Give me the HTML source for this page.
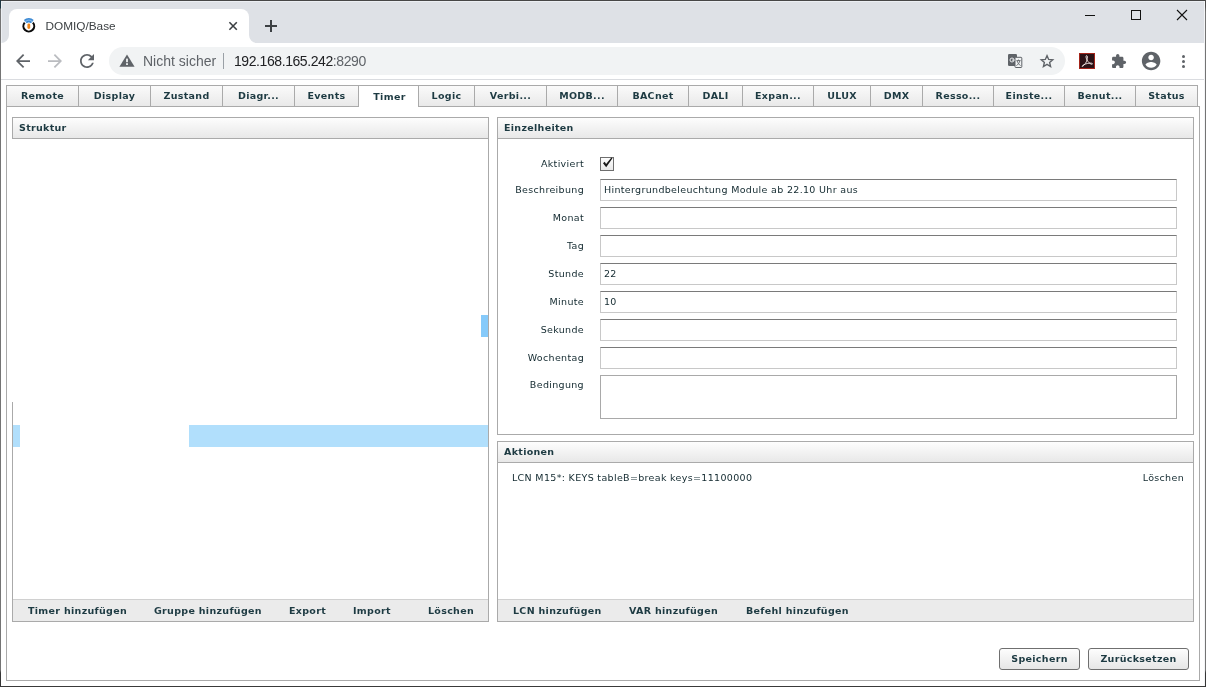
<!DOCTYPE html>
<html lang="de">
<head>
<meta charset="utf-8">
<title>DOMIQ/Base</title>
<style>
html,body{margin:0;padding:0;}
body{width:1206px;height:687px;position:relative;overflow:hidden;background:#fff;font-family:"DejaVu Sans","Liberation Sans",sans-serif;font-size:9.5px;letter-spacing:0.33px;color:#12292f;}
.abs{position:absolute;}
/* window frame */
#frame{left:0;top:0;width:1206px;height:687px;z-index:50;pointer-events:none;}
#frame i{position:absolute;display:block;}
#f-t{left:0;top:0;width:1206px;height:1px;background:#474747;}
#f-b{left:0;top:686px;width:1206px;height:1px;background:#3a3a3a;}
#f-l{left:0;top:0;width:1px;height:687px;background:linear-gradient(to bottom,#1f3742 0,#1f3742 8px,#747474 9px,#747474 670px,#353535 673px,#353535 687px);}
#f-r{left:1205px;top:0;width:1px;height:687px;background:linear-gradient(to bottom,#4a4a4a 0,#4a4a4a 6px,#747474 12px,#747474 670px,#353535 673px,#353535 687px);}
#f-hl{left:1px;top:1px;width:1204px;height:1px;background:#eceff3;}
#f-hl2{left:1px;top:1px;width:1px;height:42px;background:#eceff3;}
#f-hr{left:1204px;top:1px;width:1px;height:685px;background:#f4f5f7;}
/* chrome */
#tabstrip{left:1px;top:1px;width:1204px;height:42px;background:#dee1e6;}
#ctab{left:9px;top:9px;width:240px;height:34px;background:#fff;border-radius:8px 8px 0 0;}
#ctab-title{letter-spacing:0;left:45.5px;top:18.5px;font-family:"Liberation Sans",sans-serif;font-size:11.8px;color:#3c4043;line-height:14px;}
#toolbar{left:1px;top:43px;width:1204px;height:36px;background:#fff;}
#tbline{left:1px;top:79px;width:1204px;height:1px;background:#dadce0;}
#omni{left:109px;top:47px;width:956px;height:28px;border-radius:14px;background:#f1f3f4;}
.url{letter-spacing:0;font-family:"Liberation Sans",sans-serif;font-size:14px;line-height:16px;color:#202124;top:53px;}
/* app */
#content{left:6px;top:106px;width:1192px;height:573px;border:1px solid #aaa;background:#fff;}
.tab{top:85px;height:20px;border:1px solid #aaa;border-left:none;background:linear-gradient(#fafafa,#e9e9e9);font-weight:bold;font-size:9.5px;letter-spacing:0.31px;color:#1d3a42;text-align:center;line-height:20px;box-sizing:content-box;}
.tab.first{border-left:1px solid #aaa;}
.tab.active{background:#fff;border-bottom:none;height:20px;line-height:22px;}
.tab.active::after{content:"";position:absolute;left:0;right:0;bottom:-1px;height:1px;background:#fff;}
.panel{border:1px solid #aaa;background:#fff;box-sizing:border-box;}
.phead{left:0;top:0;right:0;height:20px;border-bottom:1px solid #aaa;background:linear-gradient(#fdfdfd,#e8e8e8);font-weight:bold;font-size:9.5px;letter-spacing:0.31px;color:#1d3a42;line-height:19px;padding-left:6px;}
.pfoot{left:0;bottom:0;right:0;height:21px;border-top:1px solid #d0d0d0;background:#ebebeb;font-weight:bold;font-size:9.5px;letter-spacing:0.31px;color:#1d3a42;line-height:21px;}
.pfoot span{position:absolute;top:0;white-space:nowrap;}
.lbl{text-align:right;width:80px;left:6px;line-height:14px;white-space:nowrap;}
.inp{left:102px;width:572px;height:20px;border:1px solid #c8c8c8;border-top-color:#7a7a7a;background:#fff;line-height:20px;padding-left:3px;white-space:nowrap;}
.btn{top:648px;height:20px;border:1px solid #6f6f6f;border-radius:3px;background:linear-gradient(#fdfdfd,#e6e6e6);font-weight:bold;font-size:9.5px;letter-spacing:0.31px;color:#1d3a42;text-align:center;line-height:20px;}
</style>
</head>
<body><div id="gs" style="position:absolute;left:0;top:0;width:1206px;height:687px;will-change:transform;">
<!-- browser chrome -->
<div class="abs" id="tabstrip"></div>
<div class="abs" id="ctab"></div>
<div class="abs" id="ctab-title">DOMIQ/Base</div>
<div class="abs" id="toolbar"></div>
<div class="abs" id="tbline"></div>
<div class="abs" id="omni"></div>
<div class="abs url" style="left:143px;color:#5f6368;">Nicht sicher</div>
<div class="abs" style="left:223px;top:53px;width:1px;height:16px;background:#9aa0a6;"></div>
<div class="abs url" style="left:234px;letter-spacing:-0.42px;">192.168.165.242<span style="color:#5f6368">:8290</span></div>


<!-- chrome icons -->
<svg class="abs" style="left:0;top:0;" width="1206" height="80" viewBox="0 0 1206 80">
  <!-- tab foot curves -->
  <path d="M1 43 H9 V35 A8 8 0 0 1 1 43 Z" fill="#fff"/>
  <path d="M257 43 H249 V35 A8 8 0 0 0 257 43 Z" fill="#fff"/>
  <!-- favicon -->
  <g>
    <path d="M24.7 22.6 A5.4 5.4 0 1 0 32.9 22.6" fill="none" stroke="#0a0a0a" stroke-width="2.1"/>
    <path d="M24.2 20.9 A6 6 0 0 1 33.4 20.9 L30.6 23.2 A2.4 2.4 0 0 0 27 23.2 Z" fill="#7fb6e8"/>
    <path d="M24.4 20.6 A6 6 0 0 1 33.2 20.6" fill="none" stroke="#3d8ad4" stroke-width="1.5"/>
    <path d="M26.3 22.6 A3.4 3.4 0 0 1 31.3 22.6" fill="none" stroke="#3d8ad4" stroke-width="1.3"/>
    <rect x="27.4" y="23.4" width="2.8" height="5.6" rx="1.4" fill="#f0861a"/>
  </g>
  <!-- tab close -->
  <path d="M229.4 22.3 L236.8 29.7 M236.8 22.3 L229.4 29.7" stroke="#3c4043" stroke-width="1.6" fill="none"/>
  <!-- new tab plus -->
  <path d="M265 26 H277 M271 20 V32" stroke="#3c4043" stroke-width="2" fill="none"/>
  <!-- window controls -->
  <rect x="1085" y="15" width="10" height="1" fill="#111"/>
  <rect x="1131.5" y="10.5" width="9" height="9" fill="none" stroke="#111" stroke-width="1"/>
  <path d="M1177 10 L1187 20 M1187 10 L1177 20" stroke="#111" stroke-width="1.1" fill="none"/>
  <!-- back -->
  <g transform="translate(12.5,50.5) scale(0.875)" fill="#5f6368"><path d="M20 11H7.83l5.59-5.59L12 4l-8 8 8 8 1.41-1.41L7.83 13H20v-2z"/></g>
  <!-- forward -->
  <g transform="translate(44.5,50.5) scale(0.875)" fill="#babcc0"><path d="M12 4l-1.41 1.41L16.17 11H4v2h12.17l-5.58 5.59L12 20l8-8z"/></g>
  <!-- reload -->
  <g transform="translate(76.5,50.5) scale(0.875)" fill="#5f6368"><path d="M17.65 6.35C16.2 4.9 14.21 4 12 4c-4.42 0-7.99 3.58-7.99 8s3.57 8 7.99 8c3.73 0 6.84-2.55 7.73-6h-2.08c-.82 2.33-3.04 4-5.65 4-3.31 0-6-2.69-6-6s2.69-6 6-6c1.66 0 3.14.69 4.22 1.78L13 11h7V4l-2.35 2.35z"/></g>
  <!-- warning -->
  <path d="M127 54.4 L134.6 66.8 H119.4 Z" fill="#5f6368"/>
  <rect x="126.1" y="58.6" width="1.8" height="3.6" fill="#f1f3f4"/>
  <rect x="126.1" y="63.2" width="1.8" height="1.8" fill="#f1f3f4"/>
  <!-- translate -->
  <g>
    <rect x="1008" y="54" width="9" height="12" rx="1.2" fill="#5f6368"/>
    <rect x="1015" y="57.3" width="6.8" height="10.2" rx="0.8" fill="#f1f3f4" stroke="#5f6368" stroke-width="1"/>
    <circle cx="1012" cy="60" r="2" fill="none" stroke="#e8eaed" stroke-width="1"/>
    <rect x="1012" y="59.6" width="2.4" height="1" fill="#e8eaed"/>
    <path d="M1016.4 60.6 H1020.6 M1018.5 59.6 V60.6 M1019.8 60.8 C1019.4 63 1018 64.6 1016.4 65.6 M1017.2 61 C1017.8 63 1019 64.8 1020.6 65.6" stroke="#5f6368" stroke-width="0.9" fill="none"/>
  </g>
  <!-- star -->
  <path transform="translate(1047 61.2) scale(0.87) translate(-1047 -61.6)" d="M1047 55.2 L1048.9 59.6 L1053.6 60 L1050 63.1 L1051.1 67.7 L1047 65.2 L1042.9 67.7 L1044 63.1 L1040.4 60 L1045.1 59.6 Z" fill="none" stroke="#5f6368" stroke-width="1.6" stroke-linejoin="miter"/>
  <!-- acrobat -->
  <rect x="1079.5" y="53.5" width="15" height="15" fill="#2b1216" stroke="#a3241a" stroke-width="1"/>
  <path d="M1086.6 55.6 C1085.6 55.6 1086 58.2 1087 60 C1086.4 62.4 1084.6 65 1082.8 66.2 C1081.6 67 1081.8 65.8 1083.6 64.8 C1086 63.6 1089.6 62.8 1091.6 63.2 C1093 63.6 1092.6 64.6 1091.2 64.2 C1089.6 63.6 1087.8 61.6 1087 60 C1087.6 57.8 1087.6 55.6 1086.6 55.6 Z" fill="none" stroke="#f3e9e6" stroke-width="0.9"/>
  <!-- puzzle -->
  <g transform="translate(1110.7,53.3) scale(0.67)" fill="#5f6368"><path d="M20.5 11H19V7c0-1.1-.9-2-2-2h-4V3.5C13 2.12 11.88 1 10.5 1S8 2.12 8 3.5V5H4c-1.1 0-1.99.9-1.99 2v3.8H3.5c1.49 0 2.7 1.21 2.7 2.7s-1.21 2.7-2.7 2.7H2V20c0 1.1.9 2 2 2h3.8v-1.5c0-1.49 1.21-2.7 2.7-2.7 1.49 0 2.7 1.21 2.7 2.7V22H17c1.100 0 2-.9 2-2v-4h1.500c1.380 0 2.500-1.120 2.500-2.500S21.880 11 20.500 11z"/></g>
  <!-- avatar -->
  <g transform="translate(1140,50) scale(0.925)" fill="#5f6368"><path d="M12 2C6.480 2 2 6.480 2 12s4.480 10 10 10 10-4.480 10-10S17.520 2 12 2zm0 3c1.660 0 3 1.340 3 3s-1.340 3-3 3-3-1.340-3-3 1.340-3 3-3zm0 14.200c-2.500 0-4.710-1.280-6-3.220.030-1.990 4-3.080 6-3.080 1.990 0 5.970 1.090 6 3.080-1.290 1.940-3.500 3.220-6 3.220z"/></g>
  <!-- menu -->
  <circle cx="1183.5" cy="56.4" r="1.5" fill="#5f6368"/>
  <circle cx="1183.5" cy="61.4" r="1.5" fill="#5f6368"/>
  <circle cx="1183.5" cy="66.4" r="1.5" fill="#5f6368"/>
</svg>

<!-- app tabs -->
<div class="abs" id="content"></div>
<div id="tabs">
<div class="abs tab first" style="left:6px;width:71px;">Remote</div>
<div class="abs tab" style="left:79px;width:71px;">Display</div>
<div class="abs tab" style="left:151px;width:71px;">Zustand</div>
<div class="abs tab" style="left:223px;width:71px;">Diagr...</div>
<div class="abs tab" style="left:295px;width:63px;">Events</div>
<div class="abs tab active" style="left:359px;width:57px;padding-left:2px;">Timer</div>
<div class="abs tab" style="left:419px;width:55px;">Logic</div>
<div class="abs tab" style="left:475px;width:71px;">Verbi...</div>
<div class="abs tab" style="left:547px;width:70px;">MODB...</div>
<div class="abs tab" style="left:618px;width:70px;">BACnet</div>
<div class="abs tab" style="left:689px;width:53px;">DALI</div>
<div class="abs tab" style="left:743px;width:70px;">Expan...</div>
<div class="abs tab" style="left:814px;width:56px;">ULUX</div>
<div class="abs tab" style="left:871px;width:51px;">DMX</div>
<div class="abs tab" style="left:923px;width:70px;">Resso...</div>
<div class="abs tab" style="left:994px;width:70px;">Einste...</div>
<div class="abs tab" style="left:1065px;width:70px;">Benut...</div>
<div class="abs tab" style="left:1136px;width:61px;">Status</div>
</div>

<!-- Struktur -->
<div class="abs panel" id="p-struktur" style="left:12px;top:117px;width:477px;height:505px;">
  <div class="abs phead">Struktur</div>
  <div class="abs" style="left:-1px;top:21px;width:1px;height:263px;background:#fff;"></div>
  <div class="abs" style="left:468px;top:197px;width:7px;height:22px;background:#86cafa;"></div>
  <div class="abs" style="left:176px;top:307px;width:299px;height:22px;background:#b1dffc;"></div>
  <div class="abs" style="left:0px;top:307px;width:7px;height:22px;background:#b1dffc;"></div>
  <div class="abs pfoot">
    <span style="left:15px;">Timer hinzufügen</span>
    <span style="left:141px;">Gruppe hinzufügen</span>
    <span style="left:276px;">Export</span>
    <span style="left:340px;">Import</span>
    <span style="left:415px;">Löschen</span>
  </div>
</div>

<!-- Einzelheiten -->
<div class="abs panel" id="p-einzel" style="left:497px;top:117px;width:697px;height:318px;">
  <div class="abs phead">Einzelheiten</div>
  <div class="abs lbl" style="top:39px;">Aktiviert</div>
  <div class="abs" id="chk" style="left:102px;top:39px;width:12px;height:12px;border:1px solid #6e6e6e;background:linear-gradient(#fdfdfd,#e9e9e9);"><svg width="12" height="12" viewBox="0 0 12 12" style="position:absolute;left:0;top:0;overflow:visible"><path d="M2.0 5.3 L3.7 3.8 L5.1 6.1 L10.4 -0.5 L11.5 0.2 L5.2 9.3 Z" fill="#1a1a1a"/></svg></div>
  <div class="abs lbl" style="top:65px;">Beschreibung</div>
  <div class="abs inp" style="top:61px;">Hintergrundbeleuchtung Module ab 22.10 Uhr aus</div>
  <div class="abs lbl" style="top:93px;">Monat</div>
  <div class="abs inp" style="top:89px;"></div>
  <div class="abs lbl" style="top:121px;">Tag</div>
  <div class="abs inp" style="top:117px;"></div>
  <div class="abs lbl" style="top:149px;">Stunde</div>
  <div class="abs inp" style="top:145px;">22</div>
  <div class="abs lbl" style="top:177px;">Minute</div>
  <div class="abs inp" style="top:173px;">10</div>
  <div class="abs lbl" style="top:205px;">Sekunde</div>
  <div class="abs inp" style="top:201px;"></div>
  <div class="abs lbl" style="top:233px;">Wochentag</div>
  <div class="abs inp" style="top:229px;"></div>
  <div class="abs lbl" style="top:260px;">Bedingung</div>
  <div class="abs inp" style="top:257px;height:42px;border-color:#a9a9a9;"></div>
</div>

<!-- Aktionen -->
<div class="abs panel" id="p-aktionen" style="left:497px;top:441px;width:697px;height:181px;">
  <div class="abs phead">Aktionen</div>
  <div class="abs" style="left:14px;top:29px;line-height:14px;white-space:nowrap;">LCN M15*: KEYS tableB=break keys=11100000</div>
  <div class="abs" style="right:9px;top:29px;line-height:14px;white-space:nowrap;">Löschen</div>
  <div class="abs pfoot">
    <span style="left:15px;">LCN hinzufügen</span>
    <span style="left:131px;">VAR hinzufügen</span>
    <span style="left:248px;">Befehl hinzufügen</span>
  </div>
</div>

<div class="abs btn" style="left:999px;width:79px;">Speichern</div>
<div class="abs btn" style="left:1088px;width:99px;">Zurücksetzen</div>

<div class="abs" id="frame"><i id="f-hl"></i><i id="f-hl2"></i><i id="f-hr"></i><i id="f-t"></i><i id="f-b"></i><i id="f-l"></i><i id="f-r"></i></div>
</div></body>
</html>
